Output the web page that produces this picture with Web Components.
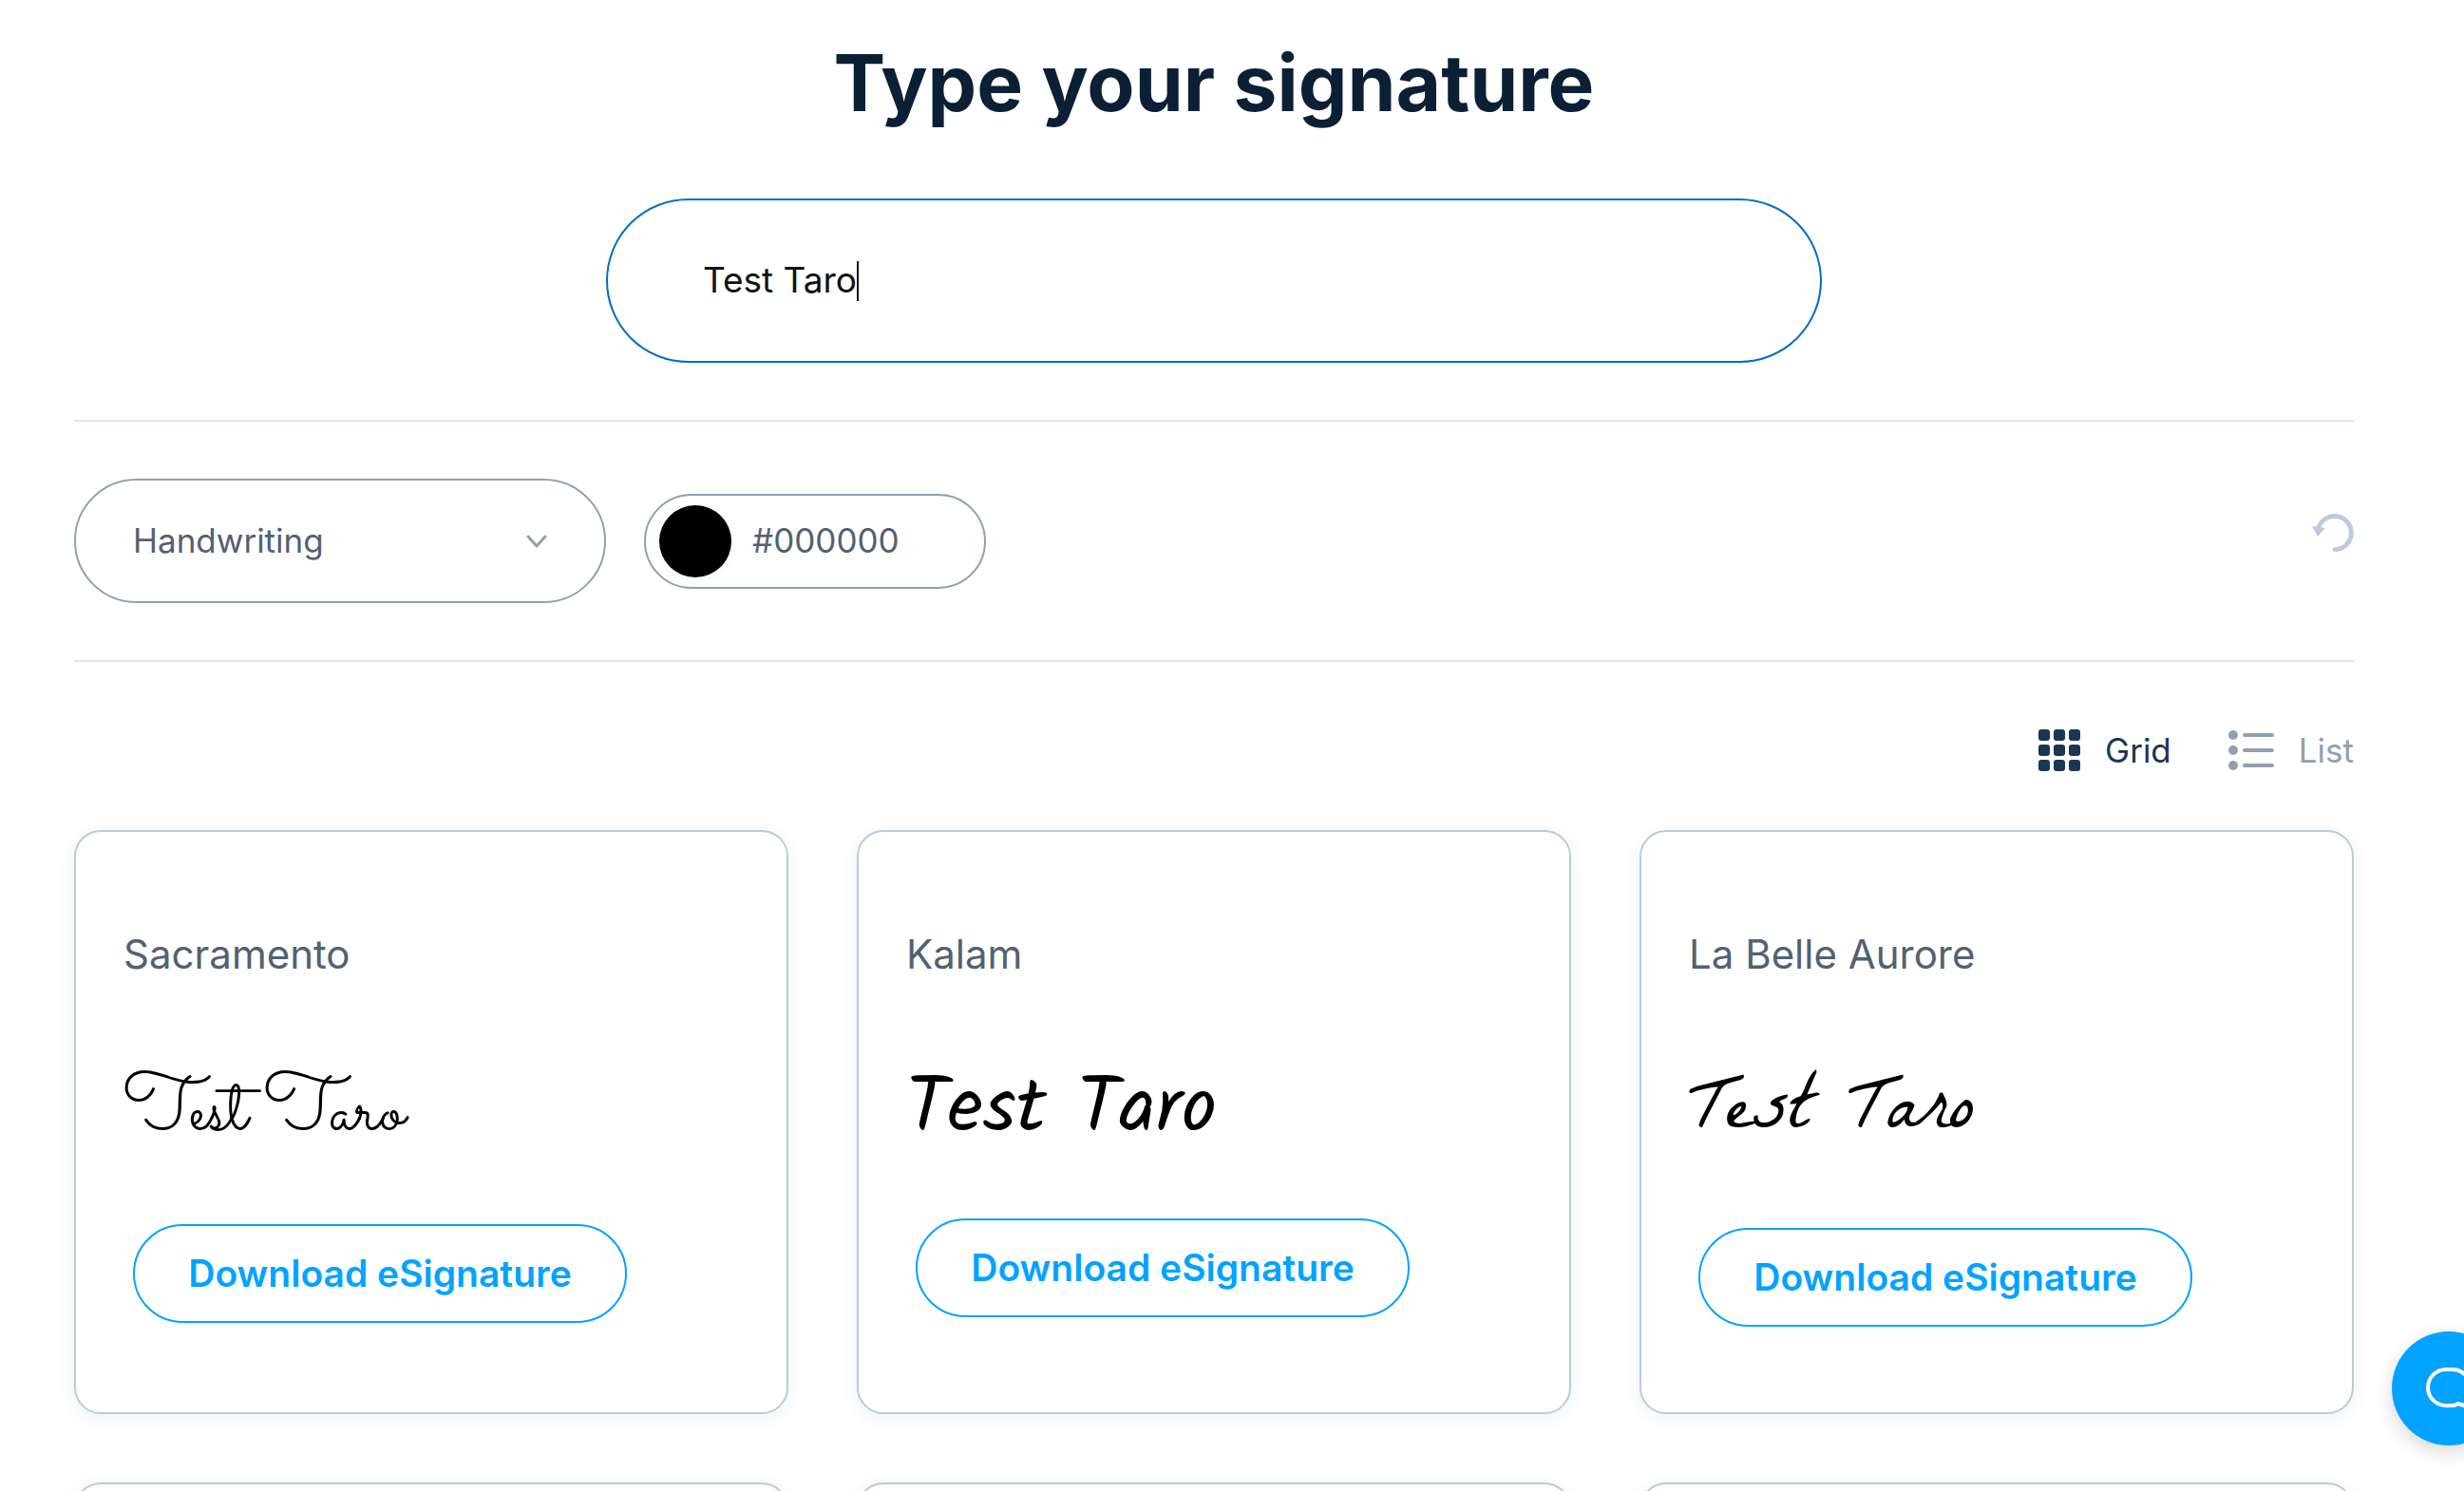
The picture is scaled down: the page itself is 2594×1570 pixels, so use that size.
<!DOCTYPE html>
<html lang="en">
<head>
<meta charset="UTF-8">
<title>Type your signature</title>
<style>
    body {
        margin: 0;
        background: #fff;
        color: #0b1f35;
        font-family: Inter, "Liberation Sans", sans-serif;
    }
</style>
</head>
<body>
<signature-page>
    <signature-input value="Test Taro"></signature-input>
    <style-toolbar slot="toolbar"></style-toolbar>
    <view-switch slot="view"></view-switch>
    <signature-card slot="cards" name="Sacramento" text="Test Taro" face="sacramento"></signature-card>
    <signature-card slot="cards" name="Kalam" text="Test Taro" face="kalam"></signature-card>
    <signature-card slot="cards" name="La Belle Aurore" text="Test Taro" face="aurore"></signature-card>
    <card-frame slot="cards"></card-frame>
    <card-frame slot="cards"></card-frame>
    <card-frame slot="cards"></card-frame>
</signature-page>
<chat-launcher></chat-launcher>

<script>
class SignaturePage extends HTMLElement {
    constructor() {
        super();
        this.attachShadow({ mode: 'open' }).innerHTML = `
            <style>
                :host { display: block; box-sizing: border-box; height: 100vh; overflow: hidden; padding: 38px 116px 0 78px; }
                h1 { margin: 0 0 71px; font-size: 82px; line-height: 100px; font-weight: 700; text-align: center; }
                .entry { display: flex; justify-content: center; margin-bottom: 60px; }
                .view { display: flex; justify-content: flex-end; margin: 71px 0 62px; }
                .cards { display: grid; grid-template-columns: repeat(3, 1fr); gap: 72px; }
            </style>
            <h1>Type your signature</h1>
            <div class="entry"><slot></slot></div>
            <slot name="toolbar"></slot>
            <div class="view"><slot name="view"></slot></div>
            <div class="cards"><slot name="cards"></slot></div>
        `;
    }
}

class SignatureInput extends HTMLElement {
    constructor() {
        super();
        this.attachShadow({ mode: 'open' }).innerHTML = `
            <style>
                :host { display: block; width: 1280px; max-width: 100%; }
                label { display: flex; align-items: center; padding: 62px 100px; border: 2px solid #0070bf; border-radius: 90px; cursor: text; }
                input { field-sizing: content; height: 45px; padding: 0 0 2px; box-sizing: border-box; border: 0; outline: 0; background: none; color: #111; font: 400 37px Inter, "Liberation Sans", sans-serif; caret-color: transparent; }
                .caret { width: 2px; height: 42px; background: #111; }
            </style>
            <label><input type="text" aria-label="Type your signature"><span class="caret"></span></label>
        `;
        this.shadowRoot.querySelector('input').value = this.getAttribute('value') || '';
    }
}

class StyleToolbar extends HTMLElement {
    constructor() {
        super();
        this.attachShadow({ mode: 'open' }).innerHTML = `
            <style>
                :host { display: flex; align-items: center; gap: 40px; padding: 60px 0; border: solid #dee6f0; border-width: 2px 0; color: #526173; }
                select, input, button { font: 400 35px Inter, "Liberation Sans", sans-serif; color: inherit; background: none; border: 0; padding: 0; outline: 0; }
                .select { display: grid; align-items: center; width: 560px; }
                .select > * { grid-area: 1 / 1; }
                select { appearance: none; width: 100%; height: 131px; padding: 0 60px 2px; border: 2px solid #929fb1; border-radius: 66px; }
                .select svg { justify-self: end; margin-right: 62px; pointer-events: none; }
                .color { display: flex; align-items: center; gap: 22px; box-sizing: border-box; width: 360px; height: 100px; padding: 0 14px; border: 2px solid #929fb1; border-radius: 50px; }
                input[type=color] { appearance: none; flex: none; width: 76px; height: 76px; border-radius: 50%; overflow: hidden; box-shadow: 0 4px 12px rgba(0, 0, 0, .04); }
                input[type=color]::-webkit-color-swatch-wrapper { padding: 0; }
                input[type=color]::-webkit-color-swatch { border: 0; }
                input[type=text] { flex: 1; min-width: 0; padding-bottom: 2px; }
                button { display: flex; margin-left: auto; padding-bottom: 18px; }
            </style>
            <div class="select">
                <select aria-label="Style"><option>Handwriting</option></select>
                <svg width="22" height="14" viewBox="0 0 22 14" fill="none" stroke="#929fb1" stroke-width="3" stroke-linecap="round"><path d="M2 2l9 10 9-10"/></svg>
            </div>
            <div class="color">
                <input type="color" value="#000000" aria-label="Pick a color">
                <input type="text" value="#000000" aria-label="Hex color">
            </div>
            <button aria-label="Reset">
                <svg width="44" height="40" viewBox="0 0 44 40"><path d="M24 37.600A17.600 17.600 0 1 0 7 14.500" fill="none" stroke="#bacadf" stroke-width="4.800" stroke-linecap="round"/><path d="M0 13l14 2-8 9z" fill="#bacadf"/></svg>
            </button>
        `;
    }
}

class ViewSwitch extends HTMLElement {
    constructor() {
        super();
        this.attachShadow({ mode: 'open' }).innerHTML = `
            <style>
                :host { display: flex; gap: 60px; }
                button { display: flex; align-items: center; gap: 26px; height: 44px; padding: 0; border: 0; background: none; color: #929fb1; font: 400 35px Inter, "Liberation Sans", sans-serif; }
                .active { color: #1b3653; }
            </style>
            <button class="active" aria-pressed="true">
                <svg width="44" height="44" viewBox="0 0 44 44" fill="currentColor">
                    <rect width="12" height="12" rx="3"/><rect x="16" width="12" height="12" rx="3"/><rect x="32" width="12" height="12" rx="3"/>
                    <rect y="16" width="12" height="12" rx="3"/><rect x="16" y="16" width="12" height="12" rx="3"/><rect x="32" y="16" width="12" height="12" rx="3"/>
                    <rect y="32" width="12" height="12" rx="3"/><rect x="16" y="32" width="12" height="12" rx="3"/><rect x="32" y="32" width="12" height="12" rx="3"/>
                </svg>
                Grid
            </button>
            <button aria-pressed="false">
                <svg width="48" height="42" viewBox="0 0 48 42" fill="currentColor">
                    <circle cx="5" cy="5" r="5"/><rect x="15" y="3" width="33" height="4" rx="2"/>
                    <circle cx="5" cy="21" r="5"/><rect x="15" y="19" width="33" height="4" rx="2"/>
                    <circle cx="5" cy="37" r="5"/><rect x="15" y="35" width="33" height="4" rx="2"/>
                </svg>
                List
            </button>
        `;
    }
}

class CardFrame extends HTMLElement {
    constructor() {
        super();
        this.attachShadow({ mode: 'open' }).innerHTML = `
            <style>
                :host { display: block; box-sizing: border-box; height: 100%; min-height: 400px; padding: 103px 50px 90px; border: 2px solid #bacadf; border-radius: 28px; background: #fff; box-shadow: 0 4px 20px rgba(27, 54, 83, .07); }
            </style>
            <slot></slot>
        `;
    }
}

class SignatureCard extends HTMLElement {
    constructor() {
        super();
        this.attachShadow({ mode: 'open' }).innerHTML = `
            <style>
                :host { display: block; }
                h2 { margin: 0 0 74px; color: #526173; font-size: 42px; line-height: 52px; font-weight: 400; }
                .signature { margin: 0 0 48px; color: #000; font-size: 82px; font-weight: 400; white-space: nowrap; }
                .sacramento { font-family: Sacramento, Lato, cursive; line-height: 136px; }
                .kalam { font-family: Kalam, "Open Sans", cursive; line-height: 130px; }
                .aurore { font-family: "La Belle Aurore", Lato, cursive; line-height: 140px; }
                button { display: block; width: 520px; max-width: 100%; height: 104px; margin-left: 10px; padding: 0 0 2px; border: 2px solid #00a3ff; border-radius: 52px; background: #fff; color: #00a3ff; font: 600 39px Inter, "Liberation Sans", sans-serif; }
            </style>
            <card-frame>
                <h2></h2>
                <p class="signature"></p>
                <button>Download eSignature</button>
            </card-frame>
        `;
        this.shadowRoot.querySelector('h2').textContent = this.getAttribute('name');
        const signatureEl = this.shadowRoot.querySelector('.signature');
        signatureEl.textContent = this.getAttribute('text');
        signatureEl.classList.add(this.getAttribute('face'));
    }
}

// Floating help button, partly past the right edge
class ChatLauncher extends HTMLElement {
    constructor() {
        super();
        this.attachShadow({ mode: 'open' }).innerHTML = `
            <style>
                :host { display: block; position: fixed; right: -44px; bottom: 48px; }
                button { display: flex; align-items: center; justify-content: center; width: 120px; height: 120px; padding: 0; border: 0; border-radius: 50%; background: #00a3ff; box-shadow: 0 6px 20px rgba(0, 0, 0, .16); }
            </style>
            <button aria-label="Chat">
                <svg width="52" height="48" viewBox="0 0 52 48" fill="none" stroke="#fff" stroke-width="4" stroke-linejoin="round"><path d="M23 4h7a19 19 0 0 1 15 30l3 10-12-4q-3 2-6 2h-7a19 19 0 0 1 0-38z"/></svg>
            </button>
        `;
    }
}

customElements.define('signature-page', SignaturePage);
customElements.define('signature-input', SignatureInput);
customElements.define('style-toolbar', StyleToolbar);
customElements.define('view-switch', ViewSwitch);
customElements.define('card-frame', CardFrame);
customElements.define('signature-card', SignatureCard);
customElements.define('chat-launcher', ChatLauncher);
</script>
</body>
</html>
